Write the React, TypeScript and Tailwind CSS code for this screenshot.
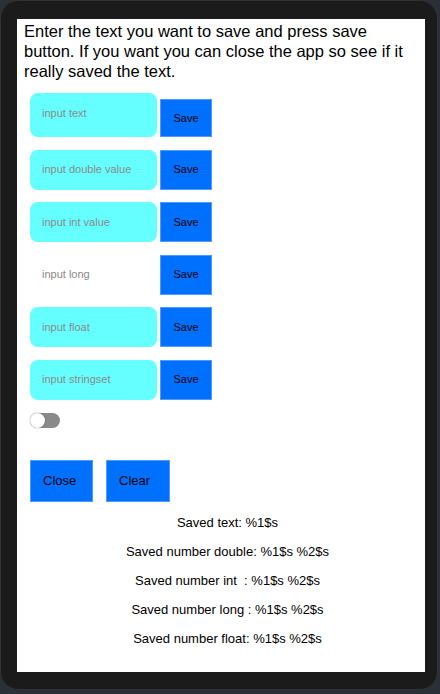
import { useState } from "react";

const rows = [
  { ph: "input text", filled: true, tall: true },
  { ph: "input double value", filled: true },
  { ph: "input int value", filled: true },
  { ph: "input long", filled: false },
  { ph: "input float", filled: true },
  { ph: "input stringset", filled: true },
];

const saved = [
  "Saved text: %1$s",
  "Saved number double: %1$s %2$s",
  "Saved number int  : %1$s %2$s",
  "Saved number long : %1$s %2$s",
  "Saved number float: %1$s %2$s",
];

const font = { fontFamily: '"Liberation Sans", Arial, sans-serif' };

export default function App() {
  const [on, setOn] = useState(false);

  return (
    <div className="w-[440px] h-[694px] bg-[#2b2f38] overflow-hidden" style={font}>
      <div className="w-[438px] h-[690px] bg-[#1b1b1b] rounded-[18px] border border-[#333] pl-[16px] pt-[18px]">
        <div className="w-[408px] h-[653px] bg-white">
          <p className="pl-[7px] pr-2 pt-[2px] text-[16.5px] leading-[20px] text-black whitespace-pre-line">
            {"Enter the text you want to save and press save\nbutton. If you want you can close the app so see if it\nreally saved the text."}
          </p>

          <div className="pl-[13px] pt-[12px] flex flex-col gap-[12.5px]">
            {rows.map((r) => (
              <div key={r.ph} className="flex items-end gap-[3px]">
                <div
                  className={`w-[127px] ${r.tall ? "h-[44px] items-start pt-[12px]" : "h-[40px] items-center"} flex rounded-[8px] pl-[12px] text-[11px] text-[#8a8a8a] ${r.filled ? "bg-[#66ffff]" : "bg-white"}`}
                >
                  {r.ph}
                </div>
                <button
                  className={`w-[52px] ${r.tall ? "h-[38px]" : "h-[40px]"} bg-[#0070ff] text-[11px] text-black flex items-center justify-center border border-[#4d9bff]`}
                >
                  Save
                </button>
              </div>
            ))}
          </div>

          <div className="pl-[13px] pt-[11px]">
            <button
              onClick={() => setOn(!on)}
              className={`relative w-[30px] h-[15px] rounded-full ${on ? "bg-[#0070ff]" : "bg-[#8a8a8a]"}`}
            >
              <span
                className={`absolute top-0 ${on ? "left-[15px]" : "left-0"} w-[15px] h-[15px] rounded-full bg-white shadow-[0_0_2px_rgba(0,0,0,0.35)]`}
              />
            </button>
          </div>

          <div className="pl-[13px] pt-[25px] flex gap-[13px]">
            <button className="w-[63px] h-[42px] bg-[#0070ff] text-[13px] text-black text-left pl-[12px] border border-[#4d9bff]">
              Close
            </button>
            <button className="w-[64px] h-[42px] bg-[#0070ff] text-[13px] text-black text-left pl-[12px] border border-[#4d9bff]">
              Clear
            </button>
          </div>

          <div className="pl-[13px] pt-[11px] flex flex-col gap-[9px]">
            {saved.map((s) => (
              <div key={s} className="text-center text-[13px] leading-[20px] text-black whitespace-pre">
                {s}
              </div>
            ))}
          </div>
        </div>
      </div>
    </div>
  );
}
